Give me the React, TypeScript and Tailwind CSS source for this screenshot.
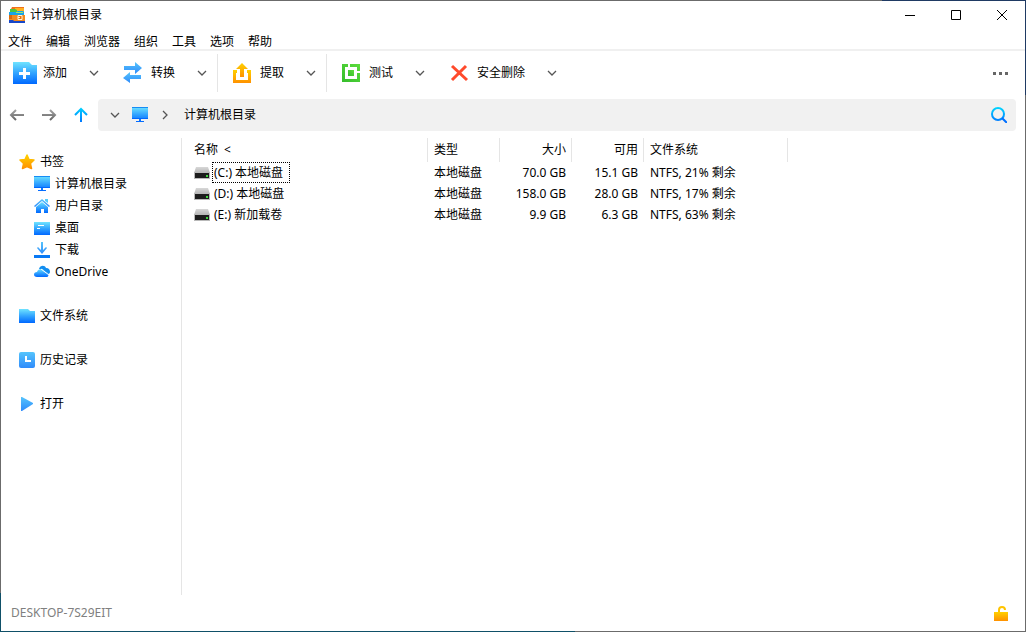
import type { ReactNode } from "react";

const menuItems = ["文件", "编辑", "浏览器", "组织", "工具", "选项", "帮助"];

const drives = [
  { name: "(C:) 本地磁盘", type: "本地磁盘", size: "70.0 GB", free: "15.1 GB", fs: "NTFS, 21% 剩余" },
  { name: "(D:) 本地磁盘", type: "本地磁盘", size: "158.0 GB", free: "28.0 GB", fs: "NTFS, 17% 剩余" },
  { name: "(E:) 新加载卷", type: "本地磁盘", size: "9.9 GB", free: "6.3 GB", fs: "NTFS, 63% 剩余" },
];

// Shared gradients, referenced by id from every icon
function Gradients() {
  return (
    <svg width="0" height="0" className="absolute" aria-hidden="true">
      <defs>
        <linearGradient id="blue" x1="0" y1="0" x2="0" y2="1">
          <stop offset="0" stopColor="#6fe3ff" />
          <stop offset="0.5" stopColor="#32a4ff" />
          <stop offset="1" stopColor="#0068ff" />
        </linearGradient>
        <linearGradient id="swap" x1="0" y1="0" x2="0" y2="1">
          <stop offset="0" stopColor="#55c4fc" />
          <stop offset="1" stopColor="#2f8bfb" />
        </linearGradient>
        <linearGradient id="cyan" gradientUnits="userSpaceOnUse" x1="0" y1="0" x2="0" y2="16">
          <stop offset="0" stopColor="#00d8ff" />
          <stop offset="1" stopColor="#0070ff" />
        </linearGradient>
        <linearGradient id="gray" gradientUnits="userSpaceOnUse" x1="0" y1="0" x2="0" y2="16">
          <stop offset="0.2" stopColor="#a0a0a0" />
          <stop offset="0.8" stopColor="#686868" />
        </linearGradient>
        <linearGradient id="amber" x1="0" y1="0" x2="0" y2="1">
          <stop offset="0" stopColor="#ffd000" />
          <stop offset="1" stopColor="#ff9100" />
        </linearGradient>
        <linearGradient id="green" x1="1" y1="0" x2="0" y2="1">
          <stop offset="0" stopColor="#5cdc3c" />
          <stop offset="1" stopColor="#35bd2c" />
        </linearGradient>
        <linearGradient id="silver" x1="0" y1="0" x2="0" y2="1">
          <stop offset="0" stopColor="#d8d8d8" />
          <stop offset="1" stopColor="#b4b4b4" />
        </linearGradient>
      </defs>
    </svg>
  );
}

function Icon({ size = 16, children }: { size?: 16 | 24; children: ReactNode }) {
  return (
    <svg
      viewBox={size === 24 ? "0 0 24 24" : "0 0 16 16"}
      className={size === 24 ? "size-6 shrink-0" : "size-4 shrink-0"}
      aria-hidden="true"
    >
      {children}
    </svg>
  );
}

const AppIcon = () => (
  <Icon>
    <path d="M3 0h12v2H2z" fill="#f0701c" />
    <path d="M6 1h9v5H6z" fill="#ffb01f" />
    <path d="M1 2h5l2 1v4H1z" fill="#4cc43c" />
    <path d="M0 5h7l2-1h5l1 1v4H0z" fill="#17a4e8" />
    <path d="M7 5h7v1H7z" fill="#9be870" />
    <path d="M0 8h16v6H0z" fill="#f38a1e" />
    <path d="M0 8h3v4H0z" fill="#d86a10" />
    <path d="M0 13h4l1 1h11v2H0z" fill="#1747c8" />
    <path d="M9 8.500h4v4H9z" fill="#e27010" stroke="#fff3d8" />
    <path d="M9 10h2v1H9z" fill="#fff3d8" />
  </Icon>
);

const MonitorIcon = () => (
  <Icon>
    <path d="M0 0h16v12H9v2h3v1H4v-1h3v-2H0z" fill="url(#blue)" />
    <path d="M0 0h16v1H0z" fill="#178cf5" />
    <path d="M0 11h16v1H0z" fill="#0068ff" />
  </Icon>
);

const HomeIcon = () => (
  <Icon>
    <path d="M8 1l8 7-1 1-7-6-7 6-1-1z" fill="url(#swap)" />
    <path d="M11 1h3v4l-3-2z" fill="#56cdfb" />
    <path d="M8 4l6 5v6h-4v-4H7v4H2V9z" fill="url(#blue)" />
  </Icon>
);

const DesktopIcon = () => (
  <Icon>
    <path d="M0 2h16v13H0z" fill="url(#blue)" />
    <path d="M4 5h6v1H4zM3 8h3v1H3z" fill="#fff" />
  </Icon>
);

const DownloadIcon = () => (
  <Icon>
    <path d="M7 0h2v8l3-3 1 1-5 6-5-6 1-1 3 3z" fill="url(#swap)" />
    <path d="M0 13h16v3H0z" fill="#0878f4" />
  </Icon>
);

const CloudIcon = () => (
  <Icon>
    <path d="M5 5c1-4 6-4 7-1 3 0 4 2 4 4 0 1-1 2-2 2L8 5z" fill="#128df0" />
    <path d="M3 13c-4 0-4-5 0-5 1-4 7-4 8 0 4-1 5 5 1 5z" fill="url(#blue)" />
    <path d="M7 5l8 6" stroke="#fff" strokeWidth="1" />
  </Icon>
);

const StarIcon = () => (
  <Icon>
    <path
      d="M8 1l2 4.500 5 .500-3.600 3.500 1.100 5L8 12.500 3.500 14.500l1.100-5L1 6l5-.500z"
      fill="url(#amber)"
      stroke="url(#amber)"
      strokeWidth="1.500"
      strokeLinejoin="round"
    />
  </Icon>
);

const FolderIcon = () => (
  <Icon>
    <path d="M0 1h9l2 2h5v12H0z" fill="url(#blue)" />
  </Icon>
);

const HistoryIcon = () => (
  <Icon>
    <rect width="16" height="16" rx="2" fill="url(#swap)" />
    <path d="M6 4h2v4h4v2H6z" fill="#fff" />
  </Icon>
);

const PlayIcon = () => (
  <Icon>
    <path d="M2 1h1l11 6v1L3 15H2z" fill="url(#swap)" />
  </Icon>
);

const DriveIcon = () => (
  <Icon>
    <path d="M2 2h12l2 6H0z" fill="url(#silver)" />
    <path d="M0 7h16v7H0z" fill="#b9b9b9" />
    <path d="M1 8h14v5H1z" fill="#1c1c1c" />
    <path d="M12 10h2v2h-2z" fill="#3fd83f" />
  </Icon>
);

const AddIcon = () => (
  <Icon size={24}>
    <path d="M0 1h16l3 3h5v19H0z" fill="url(#blue)" />
    <path d="M10 7h3v4h4v3h-4v4h-3v-4H6v-3h4z" fill="#fff" />
  </Icon>
);

const ConvertIcon = () => (
  <Icon size={24}>
    <path d="M3 5h11V1l7 6-7 6V9H3z" fill="url(#swap)" />
    <path d="M20 14H9v-3l-7 6 7 5v-4h11z" fill="url(#swap)" />
  </Icon>
);

const ExtractIcon = () => (
  <Icon size={24}>
    <path d="M3 9h4v3H6v7h12v-7h-1V9h4v13H3z" fill="url(#amber)" />
    <path d="M12 2l6 6h-4v8h-4V8H6z" fill="url(#amber)" />
  </Icon>
);

const TestIcon = () => (
  <Icon size={24}>
    <path d="M3 3h6v3H6v12h12v-6h3v9H3zM11 3h10v7h-3V6h-7z" fill="url(#green)" />
    <path d="M9 9h6v6H9z" fill="url(#green)" />
  </Icon>
);

const WipeIcon = () => (
  <Icon size={24}>
    <path d="M5 5l15 14M19 5L5 19" stroke="#ff4a2b" strokeWidth="3" />
  </Icon>
);

function ChevronDown() {
  return (
    <Icon>
      <path d="M4 6l4 4 4-4" fill="none" stroke="#555" strokeWidth="1.300" />
    </Icon>
  );
}

const tools = [
  { label: "添加", icon: <AddIcon />, divided: false },
  { label: "转换", icon: <ConvertIcon />, divided: false },
  { label: "提取", icon: <ExtractIcon />, divided: true },
  { label: "测试", icon: <TestIcon />, divided: true },
  { label: "安全删除", icon: <WipeIcon />, divided: false },
];

const bookmarks = [
  { label: "计算机根目录", icon: <MonitorIcon /> },
  { label: "用户目录", icon: <HomeIcon /> },
  { label: "桌面", icon: <DesktopIcon /> },
  { label: "下载", icon: <DownloadIcon /> },
  { label: "OneDrive", icon: <CloudIcon /> },
];

const sections = [
  { label: "文件系统", icon: <FolderIcon /> },
  { label: "历史记录", icon: <HistoryIcon /> },
  { label: "打开", icon: <PlayIcon /> },
];

function TitleBar() {
  return (
    <header className="flex h-7 items-center">
      <div className="flex flex-1 items-center gap-1 pl-2">
        <AppIcon />
        <h1 className="pl-px">计算机根目录</h1>
      </div>
      <button aria-label="最小化" className="flex h-7 w-[46px] items-center justify-center">
        <svg viewBox="0 0 10 10" className="size-2.5">
          <path d="M0 5h10v1H0z" />
        </svg>
      </button>
      <button aria-label="最大化" className="flex h-7 w-[46px] items-center justify-center">
        <svg viewBox="0 0 10 10" className="size-2.5">
          <path d="M.5.5h9v9h-9z" fill="none" stroke="#000" />
        </svg>
      </button>
      <button aria-label="关闭" className="flex h-7 w-[46px] items-center justify-center">
        <svg viewBox="0 0 10 10" className="size-2.5">
          <path d="M0 0l10 10M10 0L0 10" stroke="#000" />
        </svg>
      </button>
    </header>
  );
}

function Toolbar() {
  return (
    <div className="flex h-[46px] items-center border-t-2 border-[#f0f0f0]">
      {tools.map((tool) => (
        <div
          key={tool.label}
          className={
            tool.divided
              ? "flex h-[38px] items-center gap-[15px] border-l border-[#e5e5e5] pr-[3px] pl-3"
              : "flex h-[38px] items-center gap-[15px] pr-[3px] pl-3"
          }
        >
          <button className="flex items-center gap-1.5">
            {tool.icon}
            {tool.label}
          </button>
          <button aria-label={`${tool.label}选项`} className="flex w-6 justify-center">
            <ChevronDown />
          </button>
        </div>
      ))}
      <button aria-label="更多" className="ml-auto flex gap-[3px] py-2 pr-[17px]">
        <span className="size-[3px] bg-[#666]" />
        <span className="size-[3px] bg-[#666]" />
        <span className="size-[3px] bg-[#666]" />
      </button>
    </div>
  );
}

function AddressBar() {
  return (
    <nav className="mt-1 flex h-8 items-center pr-[9px]">
      <button aria-label="后退" className="flex w-8 justify-center">
        <Icon>
          <path d="M15 8H2M7 3L2 8l5 5" fill="none" stroke="url(#gray)" strokeWidth="2" />
        </Icon>
      </button>
      <button aria-label="前进" className="flex w-8 justify-center">
        <Icon>
          <path d="M1 8h13M9 3l5 5-5 5" fill="none" stroke="url(#gray)" strokeWidth="2" />
        </Icon>
      </button>
      <button aria-label="向上" className="flex w-8 justify-center">
        <Icon>
          <path d="M8 15V2M2 8l6-6 6 6" fill="none" stroke="url(#cyan)" strokeWidth="2" />
        </Icon>
      </button>
      <div className="ml-px flex h-8 flex-1 items-center rounded bg-[#f1f1f1] px-[9px]">
        <button aria-label="历史路径">
          <ChevronDown />
        </button>
        <span className="ml-[9px]">
          <MonitorIcon />
        </span>
        <span className="ml-2">
          <Icon>
            <path d="M7 4l4 4-4 4" fill="none" stroke="#555" strokeWidth="1.300" />
          </Icon>
        </span>
        <input
          aria-label="路径"
          defaultValue="计算机根目录"
          className="ml-3 min-w-0 flex-1 bg-transparent outline-none"
        />
        <button aria-label="搜索">
          <Icon>
            <circle cx="7" cy="7" r="6" fill="none" stroke="url(#cyan)" strokeWidth="2" />
            <path d="M11 11l5 5" stroke="#0070ff" strokeWidth="2" />
          </Icon>
        </button>
      </div>
    </nav>
  );
}

function Sidebar() {
  return (
    <aside className="w-[181px] shrink-0 border-r border-[#e5e5e5] pt-[13px] pl-[18px]">
      <a href="#" className="flex h-[22px] items-center gap-[5px]">
        <StarIcon />
        书签
      </a>
      <ul className="pl-[15px]">
        {bookmarks.map((item) => (
          <li key={item.label}>
            <a href="#" className="flex h-[22px] items-center gap-[5px]">
              {item.icon}
              {item.label}
            </a>
          </li>
        ))}
      </ul>
      {sections.map((item) => (
        <a key={item.label} href="#" className="mt-[22px] flex h-[22px] items-center gap-[5px]">
          {item.icon}
          {item.label}
        </a>
      ))}
    </aside>
  );
}

function DriveTable() {
  return (
    <main className="min-w-0 flex-1">
      <table className="w-[606px] table-fixed border-separate border-spacing-0">
        <thead>
          <tr className="h-6 *:border-r *:border-[#e5e5e5] *:p-0 *:font-normal">
            <th className="w-[246px] text-left">
              <span className="flex gap-1.5 pl-3">
                名称 <span>&lt;</span>
              </span>
            </th>
            <th className="w-[72px] text-left">
              <span className="pl-1.5">类型</span>
            </th>
            <th className="w-[72px] text-right">
              <span className="pr-[5px]">大小</span>
            </th>
            <th className="w-[72px] text-right">
              <span className="pr-[5px]">可用</span>
            </th>
            <th className="w-[144px] text-left">
              <span className="pl-1.5">文件系统</span>
            </th>
          </tr>
        </thead>
        <tbody>
          {drives.map((drive, i) => (
            <tr key={drive.name} className="h-[21px] *:py-0">
              <td className="pl-3">
                <div className="flex items-center gap-0.5">
                  <DriveIcon />
                  <span
                    className={
                      i === 0
                        ? "h-[21px] border border-dotted border-black pr-1.5 pl-px leading-[19px]"
                        : "h-[21px] border border-transparent pr-1.5 pl-px leading-[19px]"
                    }
                  >
                    {drive.name}
                  </span>
                </div>
              </td>
              <td className="pl-1.5">{drive.type}</td>
              <td className="pr-1.5 text-right">{drive.size}</td>
              <td className="pr-1.5 text-right">{drive.free}</td>
              <td className="pl-1.5">{drive.fs}</td>
            </tr>
          ))}
        </tbody>
      </table>
    </main>
  );
}

function StatusBar() {
  return (
    <footer className="flex h-9 items-center justify-between pr-4 pl-2.5 text-[#808080]">
      DESKTOP-7S29EIT
      <button aria-label="解锁">
        <Icon>
          <path d="M6 7V5c0-4 6-4 6 0" fill="none" stroke="#ffc400" strokeWidth="2" />
          <path d="M1 7h14v9H1z" fill="url(#amber)" />
        </Icon>
      </button>
    </footer>
  );
}

export default function App() {
  return (
    <div className="flex h-screen flex-col bg-white font-['Noto_Sans','Noto_Sans_CJK_SC',sans-serif] text-[12px] leading-4 text-black">
      <Gradients />
      <div className="h-px bg-linear-to-r from-[#6b6b6b] from-86% to-[#1f3a63] to-86%" />
      <div className="flex min-h-0 flex-1">
        <div className="w-px bg-linear-to-b from-[#6b6b6b] from-94% to-[#0f5068] to-94%" />
        <div className="flex min-w-0 flex-1 flex-col">
          <TitleBar />
          <div role="menubar" className="flex h-5 items-center gap-3.5 pt-1.5 pl-[7px]">
            {menuItems.map((item) => (
              <button key={item} role="menuitem">
                {item}
              </button>
            ))}
          </div>
          <Toolbar />
          <AddressBar />
          <div className="mt-[7px] flex min-h-0 flex-1">
            <Sidebar />
            <DriveTable />
          </div>
          <StatusBar />
        </div>
        <div className="w-px bg-linear-to-b from-[#1f3a63] from-15% to-[#6b6b6b] to-15%" />
      </div>
      <div className="h-px bg-linear-to-r from-[#0f5068] from-56% to-[#6b6b6b] to-56%" />
    </div>
  );
}
